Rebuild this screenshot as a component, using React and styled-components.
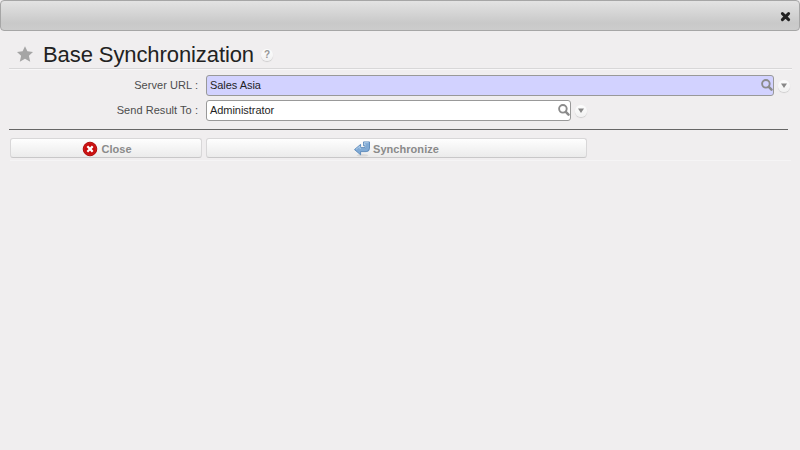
import React from 'react';
import styled, { createGlobalStyle } from 'styled-components';

const GlobalStyle = createGlobalStyle`
  * { box-sizing: border-box; }
  html, body { margin: 0; padding: 0; }
  body { background: #f0eeef; font-family: "Liberation Sans", Arial, sans-serif; overflow: hidden; }
  svg { display: block; }
`;

const Dialog = styled.main`
  width: 800px;
  height: 450px;
  background: #f0eeef;
`;

const TitleBar = styled.header`
  height: 31px;
  display: flex;
  align-items: center;
  justify-content: flex-end;
  padding: 2px 8px 0 0;
  border: 1px solid #a6a6a6;
  border-radius: 4px;
  background: linear-gradient(#e3e3e3, #c9c9c9 75%, #cccccc);
`;

const PlainButton = styled.button`
  display: block;
  padding: 0;
  border: 0;
  background: none;
`;

const Heading = styled.div`
  display: flex;
  height: 38px;
  margin: 0 8px 0 9px;
  padding-left: 8px;
  border-bottom: 1px solid #d8d7d8;
  box-shadow: 0 1px 0 #f8f7f8;
`;

const StarSlot = styled.span`
  width: 26px;
  padding-top: 15px;
`;

const Title = styled.h1`
  width: 218px;
  margin: 0;
  padding-top: 11px;
  font-size: 22px;
  font-weight: 400;
  line-height: 26px;
  letter-spacing: -0.09px;
  white-space: nowrap;
  color: #222;
`;

const Round = styled.span`
  display: flex;
  align-items: center;
  justify-content: center;
  width: 12px;
  height: 12px;
  border-radius: 50%;
  background: linear-gradient(#fdfdfd, #f1f1f1);
  box-shadow: 0 1px 1px #cecdce;
  font-size: 10px;
  line-height: 12px;
  font-weight: 700;
  color: #969696;
`;

const HelpSlot = styled.span`
  padding-top: 18px;
`;

const Form = styled.form`
  margin: 0;
  padding-top: 6px;
`;

const Row = styled.div`
  display: flex;
  align-items: center;
  height: 21px;
  margin-bottom: 4px;
`;

const Label = styled.label`
  width: 206px;
  padding-right: 8px;
  text-align: right;
  font-size: 11px;
  line-height: 15px;
  letter-spacing: 0.05px;
  color: #4c4c4c;
`;

const Field = styled.div`
  display: flex;
  align-items: center;
  justify-content: space-between;
  width: ${({ $width }) => $width}px;
  height: 21px;
  margin-right: 3.5px;
  padding: 0 0.5px 0 3px;
  border: 1px solid #999;
  border-radius: 3px;
  background: ${({ $required }) => ($required ? '#d2d2ff' : '#fff')};
  font-size: 11px;
  line-height: 15px;
  letter-spacing: -0.05px;
  color: #1f1f1f;
`;

const Separator = styled.hr`
  width: 779px;
  height: 1px;
  margin: 8px 0 8px 9px;
  border: 0;
  background: #666;
`;

const Actions = styled.div`
  display: flex;
  gap: 4px;
  height: 23px;
  margin: 0 9px 0 10px;
  border-bottom: 1px solid #f5f4f5;
`;

const ActionButton = styled.button`
  display: flex;
  align-items: center;
  justify-content: center;
  gap: 3px;
  width: ${({ $width }) => $width}px;
  height: 20px;
  padding: 2px 0 0 ${({ $shift }) => $shift || 0}px;
  border: 1px solid #d8d7d8;
  border-bottom-color: #c8c7c8;
  border-radius: 3px;
  background: linear-gradient(#fefefe, #ebebeb);
  font: 700 11px/15px "Liberation Sans", Arial, sans-serif;
  letter-spacing: 0.04px;
  color: #8a8a8a;
`;

const CloseCross = () => (
  <svg width="11" height="11" viewBox="0 0 11 11">
    <path d="M2.4 2.6L8.6 8.6M8.6 2.6L2.4 8.6" stroke="#222" strokeWidth="3" strokeLinecap="round" />
  </svg>
);

const Star = () => (
  <svg width="16" height="16" viewBox="0 0 16 16">
    <path d="M8 .2l2.4 5.1 5.6.6-4.1 3.9 1.3 5.9L8 12.8l-5.2 2.9 1.3-5.9L0 5.9l5.6-.6z" fill="#a5a5a5" />
  </svg>
);

const Magnifier = () => (
  <svg width="12" height="14" viewBox="0 0 12 14">
    <circle cx="4.9" cy="4.8" r="3.8" fill="none" stroke="#8b8b8b" strokeWidth="1.9" />
    <path d="M7.8 7.9l2.7 2.7" stroke="#8b8b8b" strokeWidth="2.5" strokeLinecap="round" />
  </svg>
);

const MenuArrow = () => (
  <Round>
    <svg width="6" height="5" viewBox="0 0 6 5">
      <path d="M0 .5h6L3 5z" fill="#888" />
    </svg>
  </Round>
);

const StopIcon = () => (
  <svg width="16" height="16" viewBox="0 0 16 16">
    <circle cx="8" cy="8" r="6.8" fill="#c80b0b" stroke="#a80000" strokeWidth=".9" />
    <circle cx="8" cy="8" r="5.8" fill="none" stroke="#d52e2e" strokeWidth=".4" />
    <path d="M6.1 6.1l3.8 3.8M9.9 6.1L6.1 9.9" stroke="#fff" strokeWidth="2.2" strokeLinecap="square" />
  </svg>
);

const SyncIcon = () => (
  <svg width="16" height="16" viewBox="0 0 16 16">
    <ellipse cx="8.5" cy="14.3" rx="6" ry="1.2" fill="#d9d9d9" />
    <path d="M.5 8.6L6.6 3.4v3.1H11V4.7H9.5V.9h6v6.3q0 3.4-3.3 3.4H6.6v3.2z" fill="#80aad5" stroke="#4b7eb3" strokeWidth=".8" strokeLinejoin="round" />
    <path d="M1.9 8.4l3.9-3.2v2.1h6V3.9h-1.5V1.7h4.4" fill="none" stroke="#bcd5ed" strokeWidth=".8" />
    <path d="M12 4.2V7.4H6.9" fill="none" stroke="#5284b8" strokeWidth=".5" />
  </svg>
);

export default function App() {
  return (
    <>
      <GlobalStyle />
      <Dialog>
        <TitleBar>
          <PlainButton aria-label="Close dialog"><CloseCross /></PlainButton>
        </TitleBar>
        <Heading>
          <StarSlot><Star /></StarSlot>
          <Title>Base Synchronization</Title>
          <HelpSlot><Round>?</Round></HelpSlot>
        </Heading>
        <Form>
          <Row>
            <Label>Server URL :</Label>
            <Field $width={568} $required>Sales Asia<Magnifier /></Field>
            <MenuArrow />
          </Row>
          <Row>
            <Label>Send Result To :</Label>
            <Field $width={365}>Administrator<Magnifier /></Field>
            <MenuArrow />
          </Row>
          <Separator />
          <Actions>
            <ActionButton type="button" $width={192} $shift={2}><StopIcon />Close</ActionButton>
            <ActionButton type="button" $width={381}><SyncIcon />Synchronize</ActionButton>
          </Actions>
        </Form>
      </Dialog>
    </>
  );
}
